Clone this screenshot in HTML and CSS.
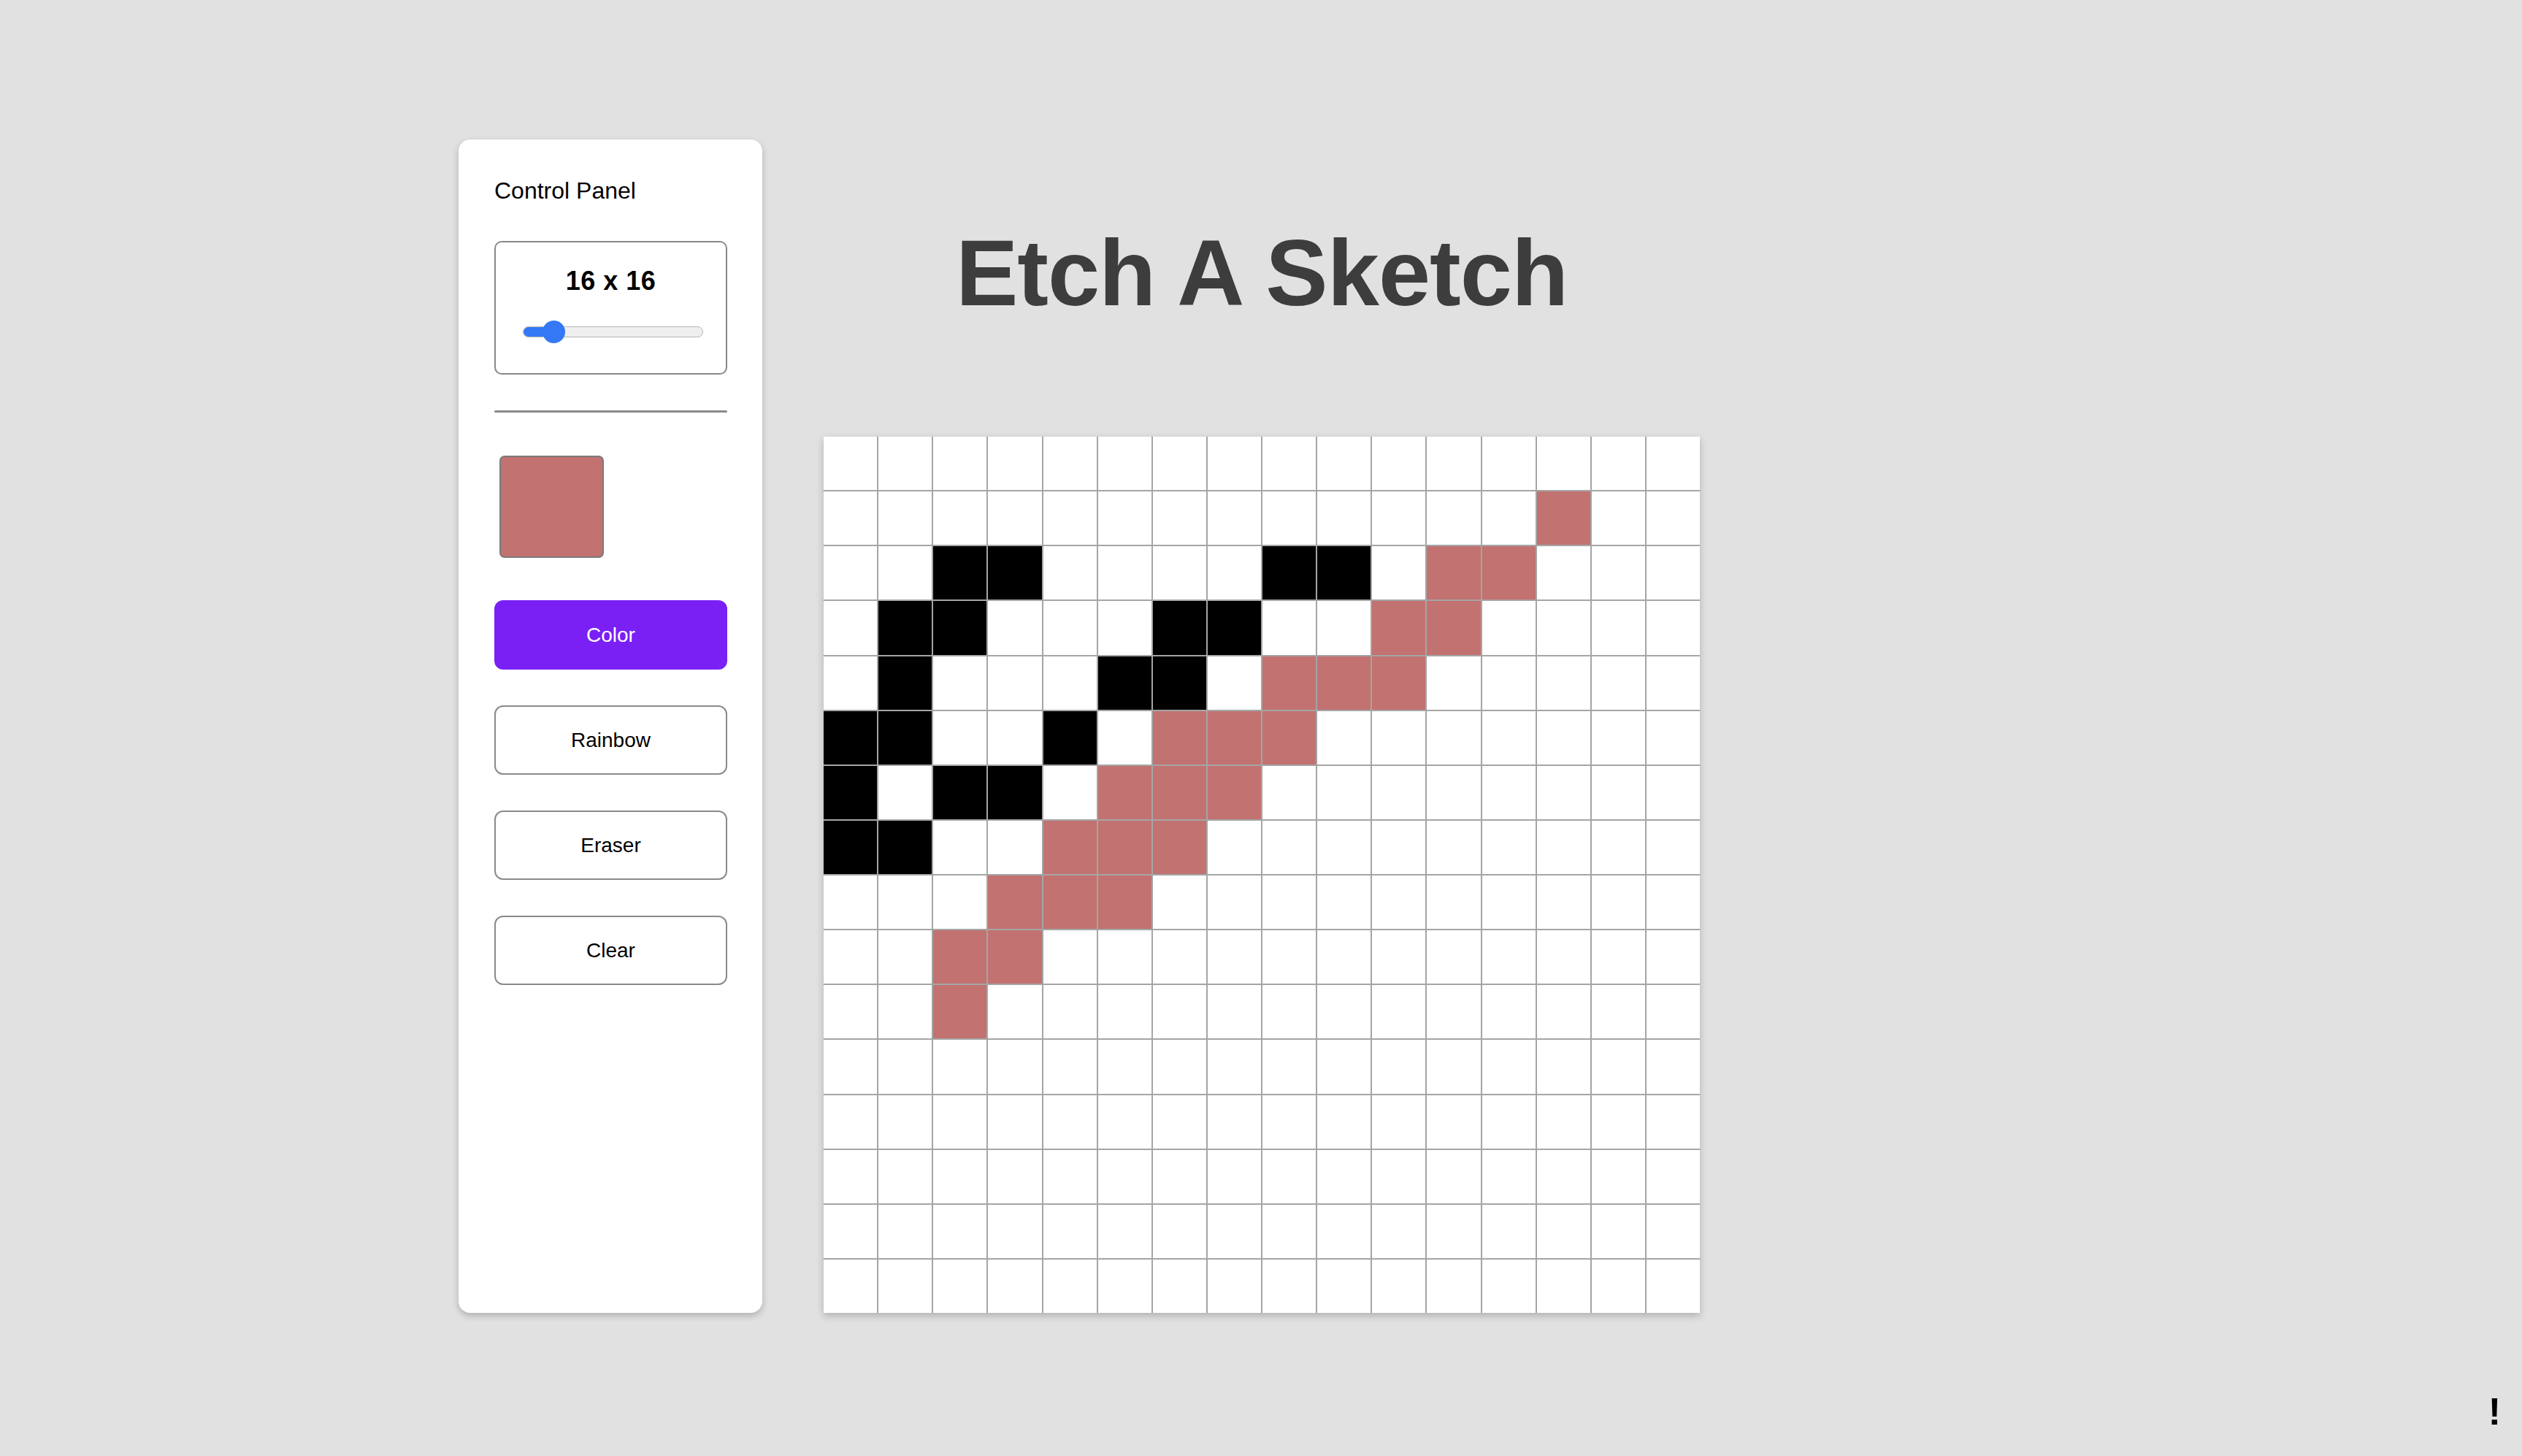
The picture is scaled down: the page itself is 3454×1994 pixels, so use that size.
FILE: index.html
```html
<!DOCTYPE html>
<html lang="en">
<head>
<meta charset="utf-8">
<title>Etch A Sketch</title>
<link rel="stylesheet" href="styles.css">
</head>
<body>
<div class="page">
  <main class="main">
    <aside class="panel">
      <h2 class="panel-title">Control Panel</h2>
      <div class="size-box">
        <div class="size-label">16 x 16</div>
        <div class="range">
          <div class="track"><div class="fill"></div></div>
          <div class="thumb"></div>
        </div>
      </div>
      <div class="divider"></div>
      <div class="swatch"></div>
      <div class="buttons">
        <button class="btn btn-active">Color</button>
        <button class="btn">Rainbow</button>
        <button class="btn">Eraser</button>
        <button class="btn">Clear</button>
      </div>
    </aside>
    <section class="board">
      <h1 class="title">Etch A Sketch</h1>
      <div class="grid">
        <span class="cell"></span><span class="cell"></span><span class="cell"></span><span class="cell"></span><span class="cell"></span><span class="cell"></span><span class="cell"></span><span class="cell"></span><span class="cell"></span><span class="cell"></span><span class="cell"></span><span class="cell"></span><span class="cell"></span><span class="cell"></span><span class="cell"></span><span class="cell"></span>
        <span class="cell"></span><span class="cell"></span><span class="cell"></span><span class="cell"></span><span class="cell"></span><span class="cell"></span><span class="cell"></span><span class="cell"></span><span class="cell"></span><span class="cell"></span><span class="cell"></span><span class="cell"></span><span class="cell"></span><span class="cell p"></span><span class="cell"></span><span class="cell"></span>
        <span class="cell"></span><span class="cell"></span><span class="cell k"></span><span class="cell k"></span><span class="cell"></span><span class="cell"></span><span class="cell"></span><span class="cell"></span><span class="cell k"></span><span class="cell k"></span><span class="cell"></span><span class="cell p"></span><span class="cell p"></span><span class="cell"></span><span class="cell"></span><span class="cell"></span>
        <span class="cell"></span><span class="cell k"></span><span class="cell k"></span><span class="cell"></span><span class="cell"></span><span class="cell"></span><span class="cell k"></span><span class="cell k"></span><span class="cell"></span><span class="cell"></span><span class="cell p"></span><span class="cell p"></span><span class="cell"></span><span class="cell"></span><span class="cell"></span><span class="cell"></span>
        <span class="cell"></span><span class="cell k"></span><span class="cell"></span><span class="cell"></span><span class="cell"></span><span class="cell k"></span><span class="cell k"></span><span class="cell"></span><span class="cell p"></span><span class="cell p"></span><span class="cell p"></span><span class="cell"></span><span class="cell"></span><span class="cell"></span><span class="cell"></span><span class="cell"></span>
        <span class="cell k"></span><span class="cell k"></span><span class="cell"></span><span class="cell"></span><span class="cell k"></span><span class="cell"></span><span class="cell p"></span><span class="cell p"></span><span class="cell p"></span><span class="cell"></span><span class="cell"></span><span class="cell"></span><span class="cell"></span><span class="cell"></span><span class="cell"></span><span class="cell"></span>
        <span class="cell k"></span><span class="cell"></span><span class="cell k"></span><span class="cell k"></span><span class="cell"></span><span class="cell p"></span><span class="cell p"></span><span class="cell p"></span><span class="cell"></span><span class="cell"></span><span class="cell"></span><span class="cell"></span><span class="cell"></span><span class="cell"></span><span class="cell"></span><span class="cell"></span>
        <span class="cell k"></span><span class="cell k"></span><span class="cell"></span><span class="cell"></span><span class="cell p"></span><span class="cell p"></span><span class="cell p"></span><span class="cell"></span><span class="cell"></span><span class="cell"></span><span class="cell"></span><span class="cell"></span><span class="cell"></span><span class="cell"></span><span class="cell"></span><span class="cell"></span>
        <span class="cell"></span><span class="cell"></span><span class="cell"></span><span class="cell p"></span><span class="cell p"></span><span class="cell p"></span><span class="cell"></span><span class="cell"></span><span class="cell"></span><span class="cell"></span><span class="cell"></span><span class="cell"></span><span class="cell"></span><span class="cell"></span><span class="cell"></span><span class="cell"></span>
        <span class="cell"></span><span class="cell"></span><span class="cell p"></span><span class="cell p"></span><span class="cell"></span><span class="cell"></span><span class="cell"></span><span class="cell"></span><span class="cell"></span><span class="cell"></span><span class="cell"></span><span class="cell"></span><span class="cell"></span><span class="cell"></span><span class="cell"></span><span class="cell"></span>
        <span class="cell"></span><span class="cell"></span><span class="cell p"></span><span class="cell"></span><span class="cell"></span><span class="cell"></span><span class="cell"></span><span class="cell"></span><span class="cell"></span><span class="cell"></span><span class="cell"></span><span class="cell"></span><span class="cell"></span><span class="cell"></span><span class="cell"></span><span class="cell"></span>
        <span class="cell"></span><span class="cell"></span><span class="cell"></span><span class="cell"></span><span class="cell"></span><span class="cell"></span><span class="cell"></span><span class="cell"></span><span class="cell"></span><span class="cell"></span><span class="cell"></span><span class="cell"></span><span class="cell"></span><span class="cell"></span><span class="cell"></span><span class="cell"></span>
        <span class="cell"></span><span class="cell"></span><span class="cell"></span><span class="cell"></span><span class="cell"></span><span class="cell"></span><span class="cell"></span><span class="cell"></span><span class="cell"></span><span class="cell"></span><span class="cell"></span><span class="cell"></span><span class="cell"></span><span class="cell"></span><span class="cell"></span><span class="cell"></span>
        <span class="cell"></span><span class="cell"></span><span class="cell"></span><span class="cell"></span><span class="cell"></span><span class="cell"></span><span class="cell"></span><span class="cell"></span><span class="cell"></span><span class="cell"></span><span class="cell"></span><span class="cell"></span><span class="cell"></span><span class="cell"></span><span class="cell"></span><span class="cell"></span>
        <span class="cell"></span><span class="cell"></span><span class="cell"></span><span class="cell"></span><span class="cell"></span><span class="cell"></span><span class="cell"></span><span class="cell"></span><span class="cell"></span><span class="cell"></span><span class="cell"></span><span class="cell"></span><span class="cell"></span><span class="cell"></span><span class="cell"></span><span class="cell"></span>
        <span class="cell"></span><span class="cell"></span><span class="cell"></span><span class="cell"></span><span class="cell"></span><span class="cell"></span><span class="cell"></span><span class="cell"></span><span class="cell"></span><span class="cell"></span><span class="cell"></span><span class="cell"></span><span class="cell"></span><span class="cell"></span><span class="cell"></span><span class="cell"></span>
      </div>
    </section>
  </main>
  <footer class="footer">!</footer>
</div>
</body>
</html>
```
FILE: styles.css
```css
html, body {
  margin: 0;
  padding: 0;
}

body {
  background: #e1e1e1;
  font-family: "Liberation Sans", Arial, sans-serif;
  color: #000;
  overflow: hidden;
}

.page {
  height: 1994px;
  display: flex;
  flex-direction: column;
}

.main {
  flex: 1;
  display: flex;
  align-items: flex-start;
  gap: 84px;
  padding: 191px 0 0 628px;
}

/* ---------- Control panel ---------- */
.panel {
  width: 416px;
  height: 1607px;
  box-sizing: border-box;
  background: #fff;
  border-radius: 16px;
  box-shadow: 0 4px 10px rgba(0, 0, 0, 0.22);
  padding: 54px 48px 0 49px;
  display: flex;
  flex-direction: column;
}

.panel-title {
  margin: 0;
  font-size: 32px;
  line-height: 32px;
  font-weight: 400;
  color: #000;
}

.size-box {
  margin-top: 53px;
  height: 183px;
  box-sizing: border-box;
  border: 2px solid #888;
  border-radius: 10px;
  padding-top: 35px;
  display: flex;
  flex-direction: column;
  align-items: center;
}

.size-label {
  font-size: 36px;
  line-height: 36px;
  font-weight: 700;
  letter-spacing: 0.5px;
}

.range {
  position: relative;
  margin-top: 36px;
  margin-left: 6px;
  width: 247px;
  height: 31px;
  display: flex;
  align-items: center;
}

.track {
  width: 100%;
  height: 15px;
  box-sizing: border-box;
  border: 1px solid #b4b4b4;
  border-radius: 8px;
  background: #efefef;
  overflow: hidden;
}

.fill {
  width: 44px;
  height: 100%;
  background: #3478f6;
}

.thumb {
  position: absolute;
  left: 27px;
  top: 0;
  width: 31px;
  height: 31px;
  border-radius: 50%;
  background: #3478f6;
}

.divider {
  margin-top: 49px;
  height: 3px;
  border-radius: 2px;
  background: #8a8a8a;
}

.swatch {
  margin-top: 59px;
  margin-left: 7px;
  width: 143px;
  height: 140px;
  box-sizing: border-box;
  border: 2px solid #7b7b7b;
  border-radius: 7px;
  background: #c27270;
}

.buttons {
  margin-top: 58px;
  display: flex;
  flex-direction: column;
  gap: 49px;
}

.btn {
  width: 100%;
  height: 95px;
  box-sizing: border-box;
  border: 2px solid #8a8a8a;
  border-radius: 12px;
  background: #fff;
  color: #000;
  font-family: "Liberation Sans", Arial, sans-serif;
  font-size: 28px;
  font-weight: 400;
  display: flex;
  align-items: center;
  justify-content: center;
  padding: 0;
}

.btn-active {
  background: #7a20f5;
  border-color: #7a20f5;
  color: #fff;
}

/* ---------- Board ---------- */
.board {
  width: 1200px;
  padding-top: 119px;
  display: flex;
  flex-direction: column;
  align-items: center;
}

.title {
  margin: 0 0 160px;
  font-size: 128px;
  line-height: 128px;
  font-weight: 700;
  letter-spacing: -1px;
  color: #3d3d3d;
}

.grid {
  width: 1200px;
  height: 1200px;
  display: grid;
  grid-template-columns: repeat(16, 1fr);
  grid-template-rows: repeat(16, 1fr);
  gap: 2px;
  background: #a5a5a5;
  box-shadow: 0 4px 10px rgba(0, 0, 0, 0.22);
}

.cell {
  background: #fff;
}

.cell.k {
  background: #000;
}

.cell.p {
  background: #c27270;
}

/* ---------- Footer ---------- */
.footer {
  display: flex;
  justify-content: flex-end;
  padding: 0 29px 35px 0;
  font-size: 52px;
  line-height: 52px;
  font-weight: 700;
  color: #000;
}
```
